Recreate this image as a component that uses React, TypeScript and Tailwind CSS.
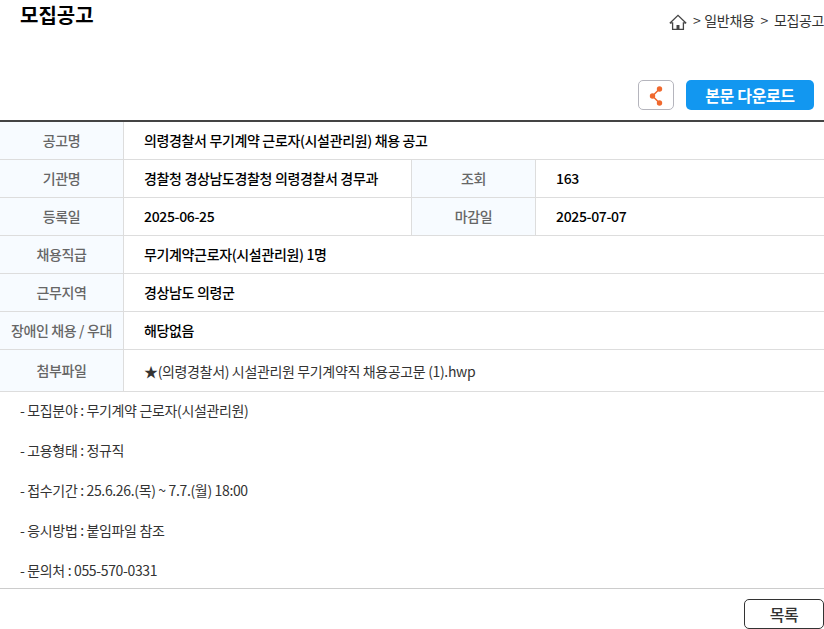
import React from 'react';

const font = "font-['Noto_Sans_CJK_KR','Noto_Sans',sans-serif]";

const th = 'border-r border-b border-[#ddd] bg-[#f7fbff] px-0 pt-0 pb-0.5 text-center font-medium text-[#666]';
const td = 'border-b border-[#ddd] pt-0 pr-2 pb-0.5 pl-5 text-left font-medium text-black';

const rows = [
  [{ label: '공고명', value: '의령경찰서 무기계약 근로자(시설관리원) 채용 공고' }],
  [
    { label: '기관명', value: '경찰청 경상남도경찰청 의령경찰서 경무과' },
    { label: '조회', value: '163' },
  ],
  [
    { label: '등록일', value: '2025-06-25' },
    { label: '마감일', value: '2025-07-07' },
  ],
  [{ label: '채용직급', value: '무기계약근로자(시설관리원) 1명' }],
  [{ label: '근무지역', value: '경상남도 의령군' }],
  [{ label: '장애인 채용 / 우대', value: '해당없음' }],
];

const details = [
  '- 모집분야 : 무기계약 근로자(시설관리원)',
  '- 고용형태 : 정규직',
  '- 접수기간 : 25.6.26.(목) ~ 7.7.(월) 18:00',
  '- 응시방법 : 붙임파일 참조',
  '- 문의처 : 055-570-0331',
];

const HomeIcon = () => (
  <svg className="h-4 w-[18px]" viewBox="0 0 18 16" fill="none" stroke="#444" strokeWidth="1.3" aria-hidden="true">
    <path d="M0.800 9.300 9 1.300l8.200 8" />
    <path d="M1 8.800h2.600V15.300h10.800V8.800H17" />
    <path d="M7.500 11h3v4.300h-3z" fill="#444" stroke="none" />
  </svg>
);

const ShareIcon = () => (
  <svg className="h-5 w-[14px]" viewBox="0 0 14 20" fill="#f0692e" aria-hidden="true">
    <path d="M10.500 3 3.500 10l7 7" fill="none" stroke="#f0692e" strokeWidth="1.5" />
    <circle cx="10.500" cy="3" r="2.700" />
    <circle cx="3.500" cy="10" r="2.700" />
    <circle cx="10.500" cy="17" r="2.700" />
  </svg>
);

const App: React.FC = () => {
  return (
    <main className={`bg-white text-sm tracking-tight text-[#333] ${font}`}>
      <header className="flex items-start justify-between pl-5">
        <h1 className="text-xl leading-[30px] font-bold tracking-normal text-black">모집공고</h1>
        <nav className="flex items-center pt-2.5" aria-label="위치">
          <a href="#home" aria-label="홈" className="pt-1"><HomeIcon /></a>
          <span className="ml-1.5">&gt;</span>
          <a href="#general" className="ml-1">일반채용</a>
          <span className="ml-1.5">&gt;</span>
          <a href="#notice" className="ml-1.5">모집공고</a>
        </nav>
      </header>

      <div className="mt-[50px] flex justify-end gap-3 pr-2.5">
        <button
          type="button"
          aria-label="공유"
          className="flex h-[30px] w-9 items-center justify-center rounded-[5px] border border-[#b5b5bd] pt-0.5"
        >
          <ShareIcon />
        </button>
        <button type="button" className="h-[30px] w-32 rounded-[5px] bg-[#1297f0] text-base leading-6 font-bold text-white">
          본문 다운로드
        </button>
      </div>

      <table className="mt-2.5 w-full table-fixed border-separate border-spacing-0 border-t-2 border-[#444]">
        <colgroup>
          <col className="w-31" />
          <col />
          <col className="w-31" />
          <col />
        </colgroup>
        <tbody>
          {rows.map((cells) => (
            <tr key={cells[0].label} className="h-[38px]">
              {cells.map((cell, i) => (
                <React.Fragment key={cell.label}>
                  <th scope="row" className={th}>{cell.label}</th>
                  <td className={i < cells.length - 1 ? `${td} border-r` : td} colSpan={cells.length === 1 ? 3 : 1}>
                    {cell.value}
                  </td>
                </React.Fragment>
              ))}
            </tr>
          ))}
          <tr className="h-[42px]">
            <th scope="row" className={th}>첨부파일</th>
            <td className="border-b border-[#ddd] pr-2 pl-5" colSpan={3}>
              <a href="#file">★(의령경찰서) 시설관리원 무기계약직 채용공고문 (1).hwp</a>
            </td>
          </tr>
        </tbody>
      </table>

      <section className="flex flex-col gap-5 border-b border-[#ccc] px-5 py-2">
        {details.map((line) => (
          <p key={line}>{line}</p>
        ))}
      </section>

      <div className="mt-2.5 flex justify-end">
        <button type="button" className="h-[30px] w-20 rounded-[5px] border border-[#333] text-base leading-6 font-medium">
          목록
        </button>
      </div>
    </main>
  );
};

export default App;
